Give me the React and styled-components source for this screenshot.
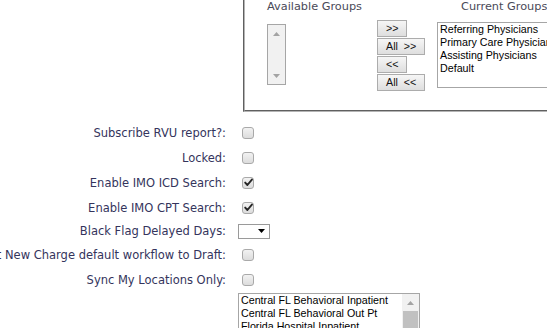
import React from 'react';
import styled, { createGlobalStyle } from 'styled-components';

const Global = createGlobalStyle`
  html, body { margin: 0; padding: 0; background: #fff; overflow: hidden; }
  body { font-family: "DejaVu Sans", Verdana, sans-serif; }
`;

const Form = styled.div`
  display: grid;
  grid-template-columns: 226px 1fr;
  column-gap: 12px;
  width: 547px;
`;

const Label = styled.div`
  min-width: 0;
  height: ${(p) => p.$h || 25}px;
  display: flex;
  justify-content: flex-end;
  align-items: center;
  white-space: nowrap;
  font-size: 11.5px;
  color: #34345c;
`;

const Value = styled.div`
  min-width: 0;
  height: ${(p) => (p.$h ? `${p.$h}px` : 'auto')};
  display: flex;
  align-items: center;
`;

const GroupBox = styled.div`
  margin: 0 0 8px 5px;
  width: 420px;
  display: flex;
  padding: 0 0 19px 22px;
  border: 2px groove #b4b4b4;
  border-top: none;
`;

const Column = styled.div`
  display: flex;
  flex-direction: column;
  width: ${(p) => p.$w}px;
  flex: none;
`;

const GroupTitle = styled.div`
  height: 16px;
  line-height: 13px;
  font-size: 11.3px;
  color: #4a4a58;
  padding-left: ${(p) => p.$indent || 0}px;
  white-space: nowrap;
`;

const ListBox = styled.div`
  box-sizing: border-box;
  margin-top: ${(p) => p.$top || 0}px;
  width: ${(p) => p.$w}px;
  height: ${(p) => p.$h}px;
  border: 1px solid #a6a6a6;
  background: #fff;
  display: flex;
  overflow: hidden;
`;

const Options = styled.div`
  flex: 1;
  min-width: 0;
  padding: 0 2px;
  font-family: "Liberation Sans", Arial, sans-serif;
  font-size: 10.7px;
  line-height: 13px;
  color: #000;
  white-space: nowrap;
`;

const ScrollBar = styled.div`
  width: 17px;
  flex: none;
  align-self: stretch;
  background: #f1f1f1;
  display: flex;
  flex-direction: column;
  align-items: stretch;
`;

const ScrollArrow = styled.div`
  height: 17px;
  display: flex;
  align-items: center;
  justify-content: center;
`;

const ScrollSpacer = styled.div`
  flex: 1;
`;

const ScrollThumb = styled.div`
  margin: 0 1px;
  height: ${(p) => p.$h}px;
  background: #c1c1c1;
`;

const ButtonStack = styled.div`
  display: flex;
  flex-direction: column;
  align-items: flex-start;
  gap: 1px;
  padding-top: 20px;
  width: 60px;
  flex: none;
`;

const MoveButton = styled.button`
  box-sizing: border-box;
  height: 17px;
  padding: 0 8px;
  margin: 0;
  border: 1px solid #acacac;
  border-radius: 0;
  background: linear-gradient(#f6f6f6, #dedede);
  font-family: "Liberation Sans", Arial, sans-serif;
  font-size: 10.7px;
  line-height: 15px;
  color: #111;
  white-space: pre;
`;

const Box = styled.span`
  box-sizing: border-box;
  width: 12px;
  height: 12px;
  margin-left: 4px;
  border: 1px solid #a9a9a9;
  border-radius: 3px;
  background: linear-gradient(#f2f2f2, #dcdcdc);
  display: inline-flex;
  align-items: center;
  justify-content: center;
`;

const DropDown = styled.span`
  box-sizing: border-box;
  width: 32px;
  height: 15px;
  border: 1px solid #9a9a9a;
  background: #fff;
  display: inline-flex;
  align-items: center;
  justify-content: flex-end;
  padding-right: 4px;
`;

const BottomList = styled(ListBox)`
  margin-top: 1px;
`;

const Up = ({ c = '#a3a3a3' }) => (
  <svg width="7" height="4" viewBox="0 0 7 4"><path d="M0 4 L3.5 0 L7 4 Z" fill={c} /></svg>
);
const Down = ({ c = '#a3a3a3' }) => (
  <svg width="7" height="4" viewBox="0 0 7 4"><path d="M0 0 L3.5 4 L7 0 Z" fill={c} /></svg>
);

const Check = ({ checked }) => (
  <Box>
    {checked && (
      <svg width="9" height="9" viewBox="0 0 9 9">
        <path d="M1.2 4.6 L3.4 7 L7.9 1.6" fill="none" stroke="#262626" strokeWidth="1.9" strokeLinejoin="round" strokeLinecap="round" />
      </svg>
    )}
  </Box>
);

const rows = [
  { label: 'Subscribe RVU report?:', checked: false },
  { label: 'Locked:', checked: false },
  { label: 'Enable IMO ICD Search:', checked: true },
  { label: 'Enable IMO CPT Search:', checked: true },
];

export default function App() {
  return (
    <>
      <Global />
      <Form>
        <Label $h={120} />
        <Value>
          <GroupBox>
            <Column $w={110}>
              <GroupTitle>Available Groups</GroupTitle>
              <ListBox $top={8} $w={19} $h={61}>
                <ScrollBar>
                  <ScrollArrow><Up /></ScrollArrow>
                  <ScrollSpacer />
                  <ScrollArrow><Down /></ScrollArrow>
                </ScrollBar>
              </ListBox>
            </Column>
            <ButtonStack>
              <MoveButton>{'>>'}</MoveButton>
              <MoveButton>{'All  >>'}</MoveButton>
              <MoveButton>{'<<'}</MoveButton>
              <MoveButton>{'All  <<'}</MoveButton>
            </ButtonStack>
            <Column $w={160}>
              <GroupTitle $indent={24}>Current Groups</GroupTitle>
              <ListBox $top={6} $w={140} $h={66}>
                <Options>
                  <div>Referring Physicians</div>
                  <div>Primary Care Physicians</div>
                  <div>Assisting Physicians</div>
                  <div>Default</div>
                </Options>
              </ListBox>
            </Column>
          </GroupBox>
        </Value>

        {rows.map((r) => (
          <React.Fragment key={r.label}>
            <Label>{r.label}</Label>
            <Value $h={25}><Check checked={r.checked} /></Value>
          </React.Fragment>
        ))}

        <Label $h={22}>Black Flag Delayed Days:</Label>
        <Value $h={22}>
          <DropDown><Down c="#000" /></DropDown>
        </Value>

        <Label>Set New Charge default workflow to Draft:</Label>
        <Value $h={25}><Check /></Value>

        <Label>Sync My Locations Only:</Label>
        <Value $h={25}><Check /></Value>

        <Label $h={60} />
        <Value>
          <BottomList $w={182} $h={60}>
            <Options>
              <div>Central FL Behavioral Inpatient</div>
              <div>Central FL Behavioral Out Pt</div>
              <div>Florida Hospital Inpatient</div>
              <div>Florida Hospital Outpatient</div>
            </Options>
            <ScrollBar>
              <ScrollArrow><Up /></ScrollArrow>
              <ScrollThumb $h={30} />
              <ScrollSpacer />
            </ScrollBar>
          </BottomList>
        </Value>
      </Form>
    </>
  );
}
